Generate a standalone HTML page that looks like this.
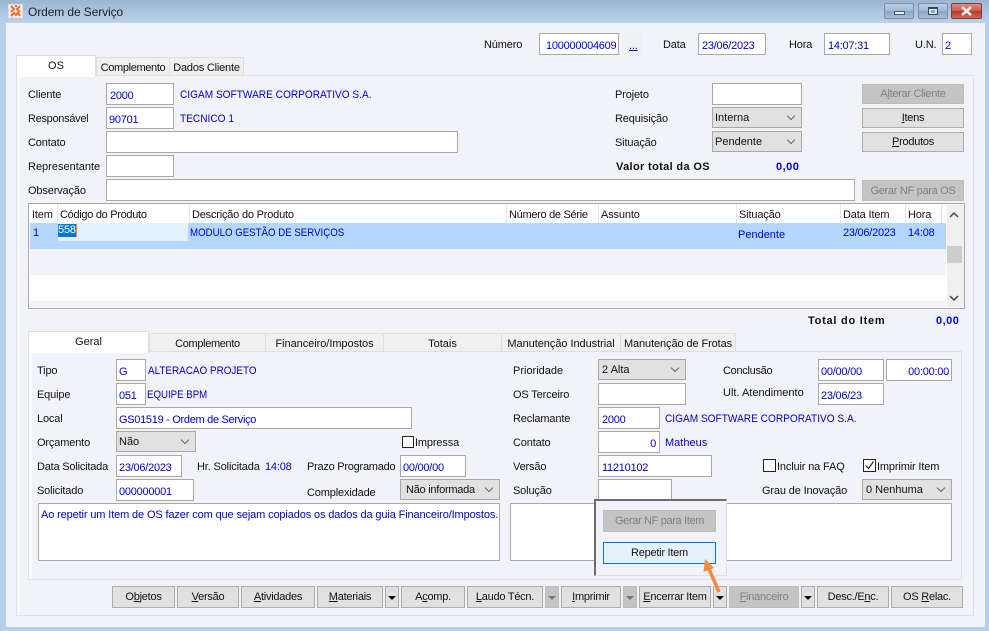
<!DOCTYPE html>
<html><head><meta charset="utf-8"><title>Ordem de Serviço</title>
<style>
html,body{margin:0;padding:0}
body{width:989px;height:631px;overflow:hidden;position:relative;background:#b7d0ea;font:11px/14px "Liberation Sans",sans-serif;color:#111}
div,span.a{position:absolute;box-sizing:border-box}
.t{white-space:nowrap;line-height:14px;height:14px;margin-top:1px;letter-spacing:-.15px}
.b{color:#0000c8}
.x{letter-spacing:0;transform-origin:0 50%}
.B{font-weight:bold;letter-spacing:.35px}
.i{background:#fff;border:1px solid #a8a8a8;height:22px;line-height:22px;padding:1px 0 0 6px;color:#0000c8;white-space:nowrap;letter-spacing:-.25px}
.s{background:#e1e1e1;border:1px solid #a8a8a8;height:21px;line-height:21px;padding-left:3px;color:#111;white-space:nowrap}
.s:after{content:"";position:absolute;right:7px;top:5px;width:5px;height:5px;border-right:1px solid #666;border-bottom:1px solid #666;transform:rotate(45deg)}
.k{background:#e1e1e1;border:1px solid #adadad;text-align:center;line-height:21px;color:#111;white-space:nowrap;letter-spacing:-.25px}
.d{background:#c4c4c4;border:1px solid #bcbcbc;color:#808080}
.tab{background:#f0f0f0;border:1px solid #dcdee2;text-align:center;line-height:20px;white-space:nowrap}
.on{background:#fff;border-bottom:0}
.sep{width:1px;height:19px;top:204px;background:#e4e6ea}
.ar{width:14px;height:22px;top:586px;background:#e1e1e1;border:1px solid #adadad}
.ar:after{content:"";position:absolute;left:2px;top:9px;border-left:4px solid transparent;border-right:4px solid transparent;border-top:4px solid #000}
.ad{background:#c4c4c4;border-color:#bcbcbc}
.ad:after{border-top-color:#777}
.c{width:12px;height:12px;background:#fff;border:1px solid #222}
.w{top:3px;height:16px;border:1px solid #7d8ea3;border-radius:2px;background:linear-gradient(#bcd0e6,#9fb8d3 50%,#88a4c4 51%,#a7c0da)}
.bt{top:586px;height:22px;line-height:21px}
</style></head><body>

<!-- title bar -->
<div style="left:0;top:0;width:989px;height:23px;background:linear-gradient(#9ab6d3,#bad3ec)"></div>
<div style="left:8px;top:4px;width:15px;height:14px;background:#f6f3ef;border:1px solid #e3e0dc">
  <svg width="13" height="12" style="position:absolute;left:0;top:0"><path d="M2 1l3 3-3 3M11 1L8 4l3 3M2 11l3-3 2 2 2-2 2 3M6 1h2" fill="none" stroke="#f0692a" stroke-width="2"/></svg>
</div>
<div class="t" style="left:28px;top:4px;font-size:12px;color:#222;letter-spacing:-.1px">Ordem de Serviço</div>
<div class="w" style="left:884px;width:30px"><div style="left:9px;top:7px;width:11px;height:4px;background:#eef2f7;border:1px solid #4a5a70"></div></div>
<div class="w" style="left:918px;width:30px"><div style="left:9px;top:3px;width:10px;height:8px;background:#dbe6f1;border:1px solid #35455a;border-top-width:2px"></div><div style="left:12px;top:6px;width:4px;height:3px;background:#8fa9c6"></div></div>
<div class="w" style="left:951px;width:31px;border-color:#8a3a30;background:linear-gradient(#dc8c80,#cc5a4c 50%,#b8352a 51%,#d06a55)">
  <svg width="29" height="14" style="position:absolute;left:0;top:0"><path d="M10 3l9 8M19 3l-9 8" stroke="#f4f1ef" stroke-width="2.6" fill="none"/></svg>
</div>

<!-- client area -->
<div style="left:6px;top:23px;width:979px;height:604px;background:#f1f3f9"></div>

<!-- header -->
<div class="t" style="left:484px;top:37px">Número</div>
<div class="i" style="left:539px;top:33px;width:80px">100000004609</div>
<div style="left:625px;top:33px;width:17px;height:22px;background:#eff0f3"></div>
<div class="t b" style="left:629px;top:38px;text-decoration:underline">...</div>
<div class="t" style="left:663px;top:37px">Data</div>
<div class="i" style="left:698px;top:33px;width:68px;padding-left:3px">23/06/2023</div>
<div class="t" style="left:789px;top:37px">Hora</div>
<div class="i" style="left:824px;top:33px;width:66px;padding-left:3px">14:07:31</div>
<div class="t" style="left:915px;top:37px">U.N.</div>
<div class="i" style="left:942px;top:33px;width:30px;padding-left:2px">2</div>

<!-- main tab page -->
<div style="left:16px;top:75px;width:958px;height:541px;border:1px solid #dfe1e6"></div>
<div style="left:17px;top:76px;width:3px;height:539px;background:#f9fafc"></div>
<div class="tab on" style="left:16px;top:55px;width:80px;height:22px">OS</div>
<div class="tab" style="left:96px;top:57px;width:74px;height:19px;letter-spacing:-.35px">Complemento</div>
<div class="tab" style="left:169px;top:57px;width:75px;height:19px;letter-spacing:-.2px">Dados Cliente</div>

<div class="t" style="left:28px;top:87px">Cliente</div>
<div class="t" style="left:28px;top:111px;letter-spacing:-.3px">Responsável</div>
<div class="t" style="left:28px;top:135px">Contato</div>
<div class="t" style="left:28px;top:159px;letter-spacing:0">Representante</div>
<div class="t" style="left:28px;top:183px">Observação</div>
<div class="i" style="left:106px;top:83px;width:68px;padding-left:3px">2000</div>
<div class="i" style="left:106px;top:107px;width:68px;padding-left:2px">90701</div>
<div class="i" style="left:106px;top:131px;width:352px"></div>
<div class="i" style="left:106px;top:155px;width:68px"></div>
<div class="i" style="left:106px;top:179px;width:749px"></div>
<div class="t b x" style="left:180px;top:87px;transform:scaleX(.919)">CIGAM SOFTWARE CORPORATIVO S.A.</div>
<div class="t b x" style="left:180px;top:111px;transform:scaleX(.92)">TECNICO 1</div>

<div class="t" style="left:615px;top:87px">Projeto</div>
<div class="t" style="left:615px;top:111px">Requisição</div>
<div class="t" style="left:615px;top:135px">Situação</div>
<div class="t B" style="left:616px;top:159px;letter-spacing:.35px">Valor total da OS</div>
<div class="t B" style="left:776px;top:159px;color:#0000e6;letter-spacing:.5px">0,00</div>
<div class="i" style="left:712px;top:83px;width:90px"></div>
<div class="s" style="left:712px;top:107px;width:90px;padding-left:2px">Interna</div>
<div class="s" style="left:712px;top:131px;width:90px;padding-left:2px">Pendente</div>
<div class="k d" style="left:862px;top:84px;width:102px;height:20px;line-height:19px;letter-spacing:-.3px">A<u>l</u>terar Cliente</div>
<div class="k" style="left:862px;top:108px;width:102px;height:20px;line-height:19px"><u>I</u>tens</div>
<div class="k" style="left:862px;top:132px;width:102px;height:20px;line-height:19px"><u>P</u>rodutos</div>
<div class="k d" style="left:862px;top:180px;width:102px;height:21px;line-height:20px;letter-spacing:-.3px">Gerar NF para OS</div>

<!-- grid -->
<div style="left:28px;top:203px;width:937px;height:106px;border:1px solid #a8a8a8;background:#fff"></div>
<div style="left:30px;top:223px;width:916px;height:26px;background:#b3d7ff"></div>
<div style="left:30px;top:249px;width:916px;height:26px;background:#f1f3f9"></div>
<div style="left:30px;top:301px;width:916px;height:6px;background:#f1f3f9"></div>
<div style="left:58px;top:223px;width:130px;height:18px;background:#e3f0fd"></div>
<div style="left:58px;top:224px;width:18px;height:13px;background:#0078d7"></div>
<div style="left:76px;top:224px;width:1px;height:13px;background:#e8812c"></div>
<div class="t" style="left:58px;top:222px;color:#fff;letter-spacing:-.15px">558</div>
<div class="sep" style="left:57px"></div><div class="sep" style="left:189px"></div><div class="sep" style="left:506px"></div><div class="sep" style="left:598px"></div><div class="sep" style="left:736px"></div><div class="sep" style="left:840px"></div><div class="sep" style="left:905px"></div><div class="sep" style="left:941px"></div>
<div class="t" style="left:32px;top:207px">Item</div>
<div class="t" style="left:60px;top:207px;letter-spacing:-.3px">Código do Produto</div>
<div class="t" style="left:192px;top:207px;letter-spacing:-.2px">Descrição do Produto</div>
<div class="t" style="left:509px;top:207px;letter-spacing:-.3px">Número de Série</div>
<div class="t" style="left:601px;top:207px">Assunto</div>
<div class="t" style="left:739px;top:207px">Situação</div>
<div class="t" style="left:843px;top:207px">Data Item</div>
<div class="t" style="left:908px;top:207px">Hora</div>
<div class="t b" style="left:33px;top:225px">1</div>
<div class="t b x" style="left:190px;top:225px;transform:scaleX(.88)">MODULO GESTÃO DE SERVIÇOS</div>
<div class="t b" style="left:738px;top:227px;letter-spacing:0">Pendente</div>
<div class="t b" style="left:843px;top:225px;letter-spacing:-.25px">23/06/2023</div>
<div class="t b" style="left:908px;top:225px;letter-spacing:-.2px">14:08</div>
<div style="left:947px;top:205px;width:17px;height:102px;background:#f0f0f0"></div>
<div style="left:947px;top:246px;width:15px;height:17px;background:#cdcdcd"></div>
<svg width="12" height="8" style="position:absolute;left:948px;top:211px"><path d="M2 6l4-4 4 4" fill="none" stroke="#444" stroke-width="1.5"/></svg>
<svg width="12" height="8" style="position:absolute;left:948px;top:294px"><path d="M2 2l4 4 4-4" fill="none" stroke="#444" stroke-width="1.5"/></svg>

<div class="t B" style="left:808px;top:313px;letter-spacing:.75px">Total do Item</div>
<div class="t B" style="left:936px;top:313px;color:#0000e6;letter-spacing:.5px">0,00</div>

<!-- lower tabs -->
<div style="left:28px;top:351px;width:934px;height:229px;border:1px solid #dfe1e6"></div>
<div style="left:29px;top:352px;width:3px;height:227px;background:#f9fafc"></div>
<div class="tab" style="left:149px;top:333px;width:117px;height:19px;letter-spacing:-.35px">Complemento</div>
<div class="tab" style="left:265px;top:333px;width:119px;height:19px;letter-spacing:-.05px">Financeiro/Impostos</div>
<div class="tab" style="left:383px;top:333px;width:119px;height:19px">Totais</div>
<div class="tab" style="left:501px;top:333px;width:120px;height:19px;letter-spacing:-.05px">Manutenção Industrial</div>
<div class="tab" style="left:620px;top:333px;width:116px;height:19px;letter-spacing:-.1px">Manutenção de Frotas</div>
<div class="tab on" style="left:28px;top:331px;width:121px;height:22px">Geral</div>

<div class="t" style="left:37px;top:363px">Tipo</div>
<div class="t" style="left:37px;top:387px">Equipe</div>
<div class="t" style="left:37px;top:411px">Local</div>
<div class="t" style="left:37px;top:435px">Orçamento</div>
<div class="t" style="left:37px;top:459px;letter-spacing:-.2px">Data Solicitada</div>
<div class="t" style="left:37px;top:483px">Solicitado</div>
<div class="i" style="left:116px;top:359px;width:30px;padding-left:2px">G</div>
<div class="i" style="left:116px;top:383px;width:30px;padding-left:2px">051</div>
<div class="i" style="left:116px;top:407px;width:296px;padding-left:2px;letter-spacing:-.3px">GS01519 - Ordem de Serviço</div>
<div class="s" style="left:116px;top:431px;width:80px;padding-left:2px">Não</div>
<div class="i" style="left:116px;top:455px;width:66px;padding-left:2px">23/06/2023</div>
<div class="i" style="left:116px;top:479px;width:78px;padding-left:2px">000000001</div>
<div class="t b x" style="left:148px;top:363px;transform:scaleX(.9)">ALTERACAO PROJETO</div>
<div class="t b x" style="left:147px;top:387px;transform:scaleX(.88)">EQUIPE BPM</div>
<div class="c" style="left:402px;top:436px"></div>
<div class="t" style="left:415px;top:435px">Impressa</div>
<div class="t" style="left:197px;top:459px">Hr. Solicitada</div>
<div class="t b" style="left:265px;top:459px;letter-spacing:-.2px">14:08</div>
<div class="t" style="left:307px;top:459px;letter-spacing:-.25px">Prazo Programado</div>
<div class="i" style="left:400px;top:455px;width:66px;padding-left:2px">00/00/00</div>
<div class="t" style="left:307px;top:485px">Complexidade</div>
<div class="s" style="left:400px;top:479px;width:100px;padding-left:5px;letter-spacing:-.25px">Não informada</div>
<div class="i" style="left:38px;top:503px;width:462px;height:58px;line-height:14px;padding:4px 0 0 2px;letter-spacing:-.13px">Ao repetir um Item de OS fazer com que sejam copiados os dados da guia Financeiro/Impostos.</div>

<div class="t" style="left:513px;top:363px;letter-spacing:0">Prioridade</div>
<div class="t" style="left:513px;top:387px">OS Terceiro</div>
<div class="t" style="left:513px;top:411px">Reclamante</div>
<div class="t" style="left:513px;top:435px">Contato</div>
<div class="t" style="left:513px;top:459px">Versão</div>
<div class="t" style="left:513px;top:483px">Solução</div>
<div class="s" style="left:598px;top:359px;width:88px">2 Alta</div>
<div class="i" style="left:598px;top:383px;width:88px"></div>
<div class="i" style="left:598px;top:407px;width:62px;padding-left:3px">2000</div>
<div class="i" style="left:598px;top:431px;width:62px;padding:1px 3px 0 0;text-align:right">0</div>
<div class="i" style="left:598px;top:455px;width:114px;padding-left:3px">11210102</div>
<div class="i" style="left:598px;top:479px;width:74px"></div>
<div class="t b x" style="left:665px;top:411px;transform:scaleX(.919)">CIGAM SOFTWARE CORPORATIVO S.A.</div>
<div class="t b" style="left:665px;top:435px;letter-spacing:0">Matheus</div>

<div class="t" style="left:723px;top:363px;letter-spacing:-.3px">Conclusão</div>
<div class="t" style="left:723px;top:385px;letter-spacing:0">Ult. Atendimento</div>
<div class="i" style="left:818px;top:359px;width:66px;padding-left:2px">00/00/00</div>
<div class="i" style="left:886px;top:359px;width:66px;padding:1px 2px 0 0;text-align:right">00:00:00</div>
<div class="i" style="left:818px;top:383px;width:66px;padding-left:2px">23/06/23</div>
<div class="c" style="left:763px;top:459px;width:13px;height:13px"></div>
<div class="t" style="left:777px;top:459px">Incluir na FAQ</div>
<div class="c" style="left:863px;top:459px;width:13px;height:13px"><svg width="11" height="11" style="position:absolute;left:0;top:0"><path d="M1.5 5.5l3 3 5-7" fill="none" stroke="#222" stroke-width="1.2"/></svg></div>
<div class="t" style="left:877px;top:459px">Imprimir Item</div>
<div class="t" style="left:762px;top:483px">Grau de Inovação</div>
<div class="s" style="left:862px;top:479px;width:90px">0 Nenhuma</div>
<div class="i" style="left:510px;top:503px;width:442px;height:58px"></div>

<!-- popup -->
<div style="left:594px;top:499px;width:133px;height:77px;background:#f1f3f9;border-top:2px solid #6e6e6e;border-left:2px solid #6e6e6e;border-right:1px solid #dfe1e6;border-bottom:1px solid #dfe1e6"></div>
<div class="k d" style="left:603px;top:510px;width:113px;height:22px;letter-spacing:-.35px">Gerar NF para Item</div>
<div class="k" style="left:603px;top:542px;width:113px;height:22px;background:#e5f1fb;border-color:#0078d7">Repetir Item</div>

<!-- bottom buttons -->
<div class="k bt" style="left:112px;width:63px">O<u>b</u>jetos</div>
<div class="k bt" style="left:177px;width:62px"><u>V</u>ersão</div>
<div class="k bt" style="left:241px;width:74px"><u>A</u>tividades</div>
<div class="k bt" style="left:317px;width:66px"><u>M</u>ateriais</div>
<div class="ar" style="left:385px"></div>
<div class="k bt" style="left:401px;width:64px">A<u>c</u>omp.</div>
<div class="k bt" style="left:467px;width:76px"><u>L</u>audo Técn.</div>
<div class="ar ad" style="left:545px"></div>
<div class="k bt" style="left:561px;width:60px"><u>I</u>mprimir</div>
<div class="ar ad" style="left:623px"></div>
<div class="k bt" style="left:639px;width:72px"><u>E</u>ncerrar Item</div>
<div class="ar" style="left:713px"></div>
<div class="k d bt" style="left:729px;width:70px"><u>F</u>inanceiro</div>
<div class="ar" style="left:801px"></div>
<div class="k bt" style="left:817px;width:72px">Desc./E<u>n</u>c.</div>
<div class="k bt" style="left:891px;width:72px">OS <u>R</u>elac.</div>

<!-- arrow -->
<svg width="40" height="50" style="position:absolute;left:695px;top:552px"><path d="M24 40L14 17" stroke="#f58a42" stroke-width="3.5" fill="none"/><path d="M10 7L8.5 20 19 16z" fill="#f58a42"/></svg>

</body></html>
